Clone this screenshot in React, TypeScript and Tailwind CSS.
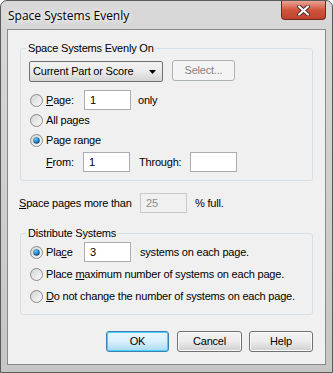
import React from "react";

const font = { fontFamily: '"Liberation Sans", Arial, sans-serif' };

function Radio({ checked }: { checked?: boolean }) {
  return (
    <svg width="13" height="13" viewBox="0 0 13 13" className="shrink-0">
      <defs>
        <linearGradient id="rbg" x1="0" y1="0" x2="1" y2="1">
          <stop offset="0" stopColor="#d2d2d2" />
          <stop offset="1" stopColor="#fbfbfb" />
        </linearGradient>
        <radialGradient id="rdot" cx="0.4" cy="0.35" r="0.7">
          <stop offset="0" stopColor="#6fd3ff" />
          <stop offset="0.6" stopColor="#1c79b8" />
          <stop offset="1" stopColor="#0e3f6a" />
        </radialGradient>
      </defs>
      <circle cx="6.5" cy="6.5" r="6" fill="url(#rbg)" stroke="#8a8a8a" />
      {checked && <circle cx="6.5" cy="6.5" r="3.2" fill="url(#rdot)" />}
    </svg>
  );
}

function Field({ value, disabled, w = "w-[47px]" }: { value?: string; disabled?: boolean; w?: string }) {
  return (
    <div
      className={`${w} h-[20px] shrink-0 border flex items-center pl-[5px] text-[11px] ${
        disabled ? "border-[#c9c9c9] bg-[#f0f0f0] text-[#8d8d8d]" : "border-[#abadb3] bg-white text-black"
      }`}
    >
      {value}
    </div>
  );
}

function Btn({ label, w, primary }: { label: string; w: string; primary?: boolean }) {
  return (
    <div
      className={`${w} h-[21px] rounded-[3px] border flex items-center justify-center text-[11px] ${
        primary
          ? "border-[#3c7fb1] bg-gradient-to-b from-[#eaf6fd] via-[#d9f0fc] to-[#a7d9f5] shadow-[inset_0_0_0_1px_#48d0fb]"
          : "border-[#707070] bg-gradient-to-b from-[#f2f2f2] via-[#ebebeb] to-[#cfcfcf] shadow-[inset_0_0_0_1px_#fcfcfc]"
      }`}
    >
      {label}
    </div>
  );
}

export default function App() {
  return (
    <div className="w-[333px] h-[373px] overflow-hidden bg-white" style={font}>
      <div className="w-[333px] h-[373px] rounded-t-[7px] border border-[#5a5a5a] bg-gradient-to-b from-[#d8d8d8] to-[#c6c6c6] flex flex-col">
        {/* title bar */}
        <div className="h-[28px] flex items-start shrink-0">
          <div
            className="ml-[7px] mt-[6px] text-[12px] text-black"
            style={{ fontFamily: '"Open Sans", "Noto Sans", sans-serif', textShadow: "0 0 8px #fff, 0 0 4px #fff" }}
          >
            Space Systems Evenly
          </div>
          <div className="ml-auto mr-[6px] w-[45px] h-[19px] rounded-b-[4px] border border-t-0 border-[#6d2a20] bg-gradient-to-b from-[#e8a393] via-[#d0553c] to-[#c0412a] flex items-center justify-center">
            <svg width="13" height="11" viewBox="0 0 13 11">
              <path d="M2 1.5 L11 9.5 M11 1.5 L2 9.5" stroke="#4a2a26" strokeWidth="4" strokeLinecap="round" />
              <path d="M2 1.5 L11 9.5 M11 1.5 L2 9.5" stroke="#ffffff" strokeWidth="2.2" strokeLinecap="round" />
            </svg>
          </div>
        </div>

        {/* client */}
        <div className="ml-[6px] w-[319px] h-[336px] border border-[#8a8a8a] bg-[#f0f0f0] text-[11px] text-black tracking-[-0.2px]">
          <fieldset className="ml-[12px] mt-[12px] w-[293px] border border-[#d5dfe5] rounded-[3px] pl-[8px] pb-[8px]">
            <legend className="ml-[-3px] px-[2px] leading-[13px]">Space Systems Evenly On</legend>
            <div className="flex items-start mt-[5px]">
              <div className="mt-[1px] w-[134px] h-[21px] rounded-[2px] border border-[#707070] bg-gradient-to-b from-[#f2f2f2] via-[#ebebeb] to-[#d4d4d4] flex items-center pl-[3px] pr-[6px]">
                <span>Current Part or Score</span>
                <svg className="ml-auto" width="7" height="4" viewBox="0 0 7 4">
                  <path d="M0 0 H7 L3.5 4 Z" fill="#000" />
                </svg>
              </div>
              <div className="ml-[9px] w-[63px] h-[21px] rounded-[3px] border border-[#adb2b5] bg-[#f4f4f4] text-[#838383] flex items-center justify-center">
                Select...
              </div>
            </div>
            <div className="flex items-center h-[20px] mt-[8px] pl-[1px]">
              <Radio />
              <span className="ml-[3px] w-[38px]">
                <u>P</u>age:
              </span>
              <Field value="1" />
              <span className="ml-[7px]">only</span>
            </div>
            <div className="flex items-center h-[20px] pl-[1px]">
              <Radio />
              <span className="ml-[3px]">All pages</span>
            </div>
            <div className="flex items-center h-[20px] pl-[1px]">
              <Radio checked />
              <span className="ml-[3px]">
                Page ran<u>g</u>e
              </span>
            </div>
            <div className="flex items-center h-[20px] mt-[2px] pl-[17px]">
              <span className="w-[37px]">
                <u>F</u>rom:
              </span>
              <Field value="1" />
              <span className="ml-[9px] w-[51px]">Through:</span>
              <Field />
            </div>
          </fieldset>

          <div className="flex items-center h-[20px] mt-[12px] ml-[11px]">
            <span className="w-[121px]">
              <u>S</u>pace pages more than
            </span>
            <Field value="25" disabled />
            <span className="ml-[8px]">% full.</span>
          </div>

          <fieldset className="ml-[12px] mt-[14px] w-[293px] border border-[#d5dfe5] rounded-[3px] pl-[9px] pb-[8px]">
            <legend className="ml-[-4px] px-[2px] leading-[13px]">Distribute Systems</legend>
            <div className="flex items-center h-[20px] mt-[2px]">
              <Radio checked />
              <span className="ml-[3px] w-[38px]">
                Pla<u>c</u>e
              </span>
              <Field value="3" />
              <span className="ml-[9px]">systems on each page.</span>
            </div>
            <div className="flex items-center h-[20px] mt-[2px]">
              <Radio />
              <span className="ml-[3px]">
                Place <u>m</u>aximum number of systems on each page.
              </span>
            </div>
            <div className="flex items-center h-[20px] mt-[2px]">
              <Radio />
              <span className="ml-[3px]">
                <u>D</u>o not change the number of systems on each page.
              </span>
            </div>
          </fieldset>

          <div className="flex mt-[16px] ml-[98px]">
            <Btn label="OK" w="w-[63px]" primary />
            <div className="ml-[8px]">
              <Btn label="Cancel" w="w-[65px]" />
            </div>
            <div className="ml-[7px]">
              <Btn label="Help" w="w-[64px]" />
            </div>
          </div>
        </div>
      </div>
    </div>
  );
}
